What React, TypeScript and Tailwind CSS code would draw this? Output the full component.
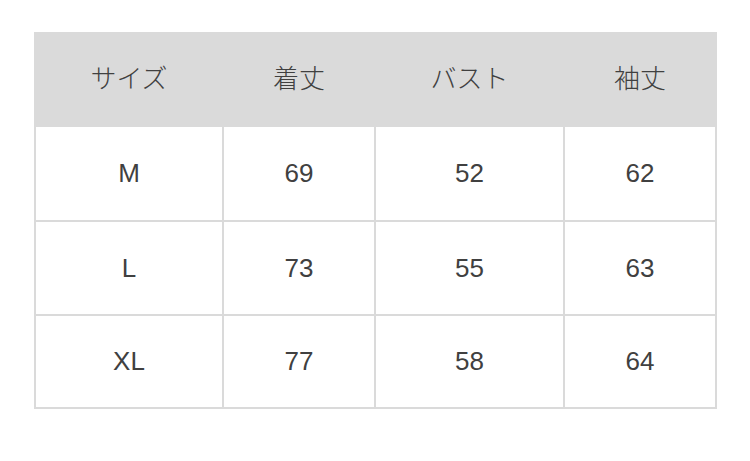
const headers = ["サイズ", "着丈", "バスト", "袖丈"];

const rows = [
  ["M", "69", "52", "62"],
  ["L", "73", "55", "63"],
  ["XL", "77", "58", "64"],
];

export default function App() {
  return (
    <div className="w-[750px] h-[461px] bg-white pt-[32px] pl-[34px]">
      {/* 枠線は背景色 + gap で表現 */}
      <div
        className="w-[683px] grid grid-cols-[186px_150px_187px_150px] grid-rows-[91px_93px_92px_91px] gap-[2px] p-[2px] bg-[#dadada] text-[26px] text-[#404040]"
        style={{ fontFamily: '"Liberation Sans", "Noto Sans CJK JP", sans-serif' }}
      >
        {headers.map((h) => (
          <div key={h} className="bg-[#dadada] flex items-center justify-center font-light">
            {h}
          </div>
        ))}
        {rows.map((row) =>
          row.map((cell, i) => (
            <div key={row[0] + i} className="bg-white flex items-center justify-center">
              {cell}
            </div>
          ))
        )}
      </div>
    </div>
  );
}
